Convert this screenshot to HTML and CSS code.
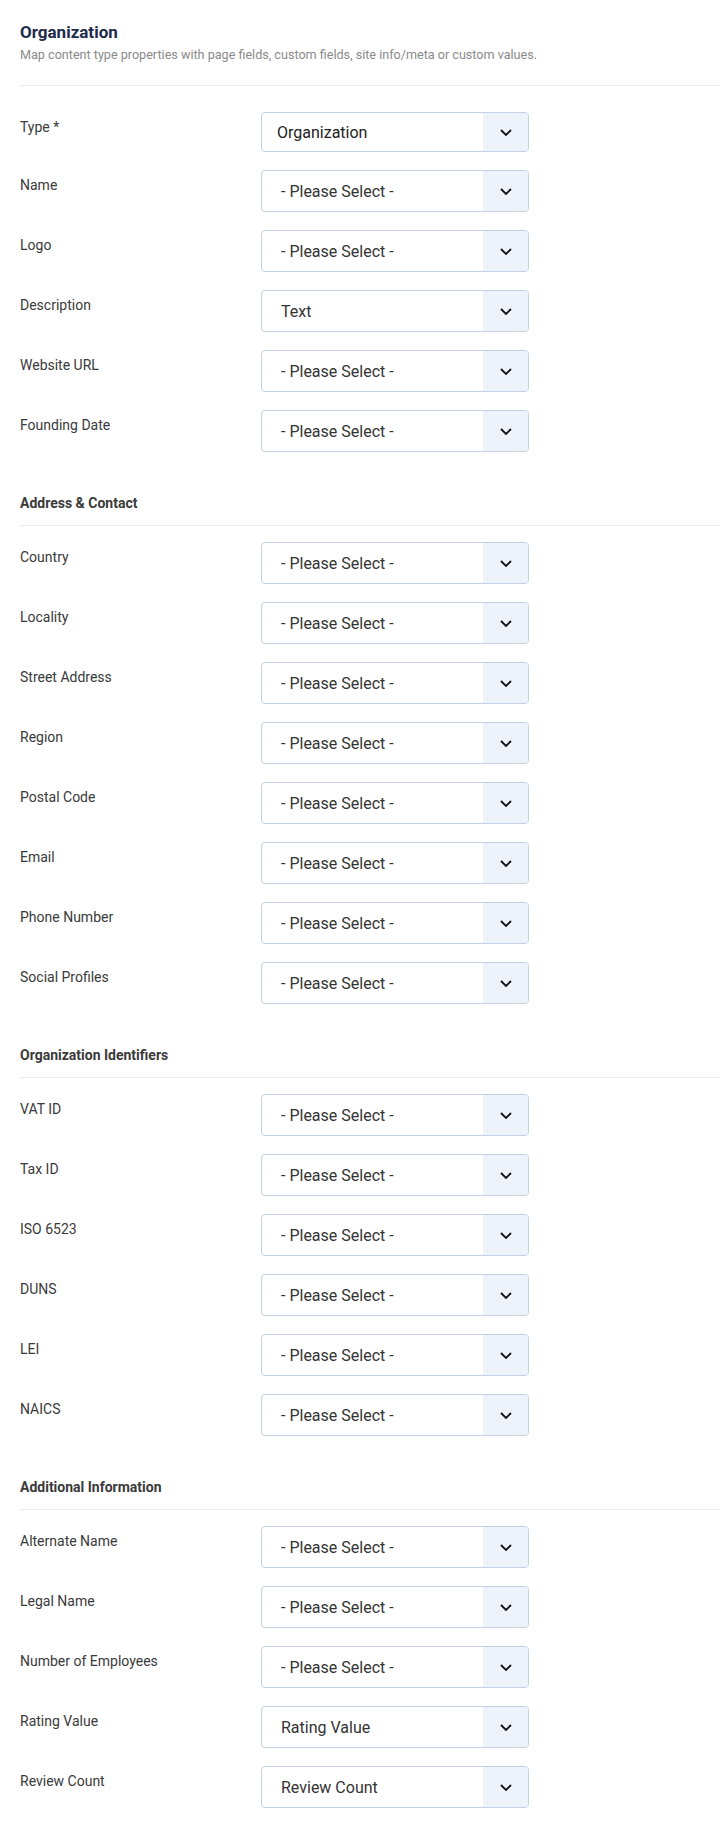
FILE: index.html
```html
<!DOCTYPE html>
<html lang="en">
<head>
    <meta charset="UTF-8">
    <meta name="viewport" content="width=device-width, initial-scale=1.0">
    <title>Organization Schema</title>
    <link rel="stylesheet" href="styles.css">
</head>
<body>
    <div class="panel">
        <div class="panel-head">
            <h2>Organization</h2>
            <p>Map content type properties with page fields, custom fields, site info/meta or custom values.</p>
        </div>

        <div class="fields">
            <div class="field">
                <label>Type *</label>
                <div class="select select-type">
                    <span class="select-value">Organization</span>
                    <span class="select-arrow"><svg viewBox="0 0 12 7" width="12" height="7"><polyline points="1,1 6,6 11,1"/></svg></span>
                </div>
            </div>
            <div class="field">
                <label>Name</label>
                <div class="select">
                    <span class="select-value">- Please Select -</span>
                    <span class="select-arrow"><svg viewBox="0 0 12 7" width="12" height="7"><polyline points="1,1 6,6 11,1"/></svg></span>
                </div>
            </div>
            <div class="field">
                <label>Logo</label>
                <div class="select">
                    <span class="select-value">- Please Select -</span>
                    <span class="select-arrow"><svg viewBox="0 0 12 7" width="12" height="7"><polyline points="1,1 6,6 11,1"/></svg></span>
                </div>
            </div>
            <div class="field">
                <label>Description</label>
                <div class="select">
                    <span class="select-value">Text</span>
                    <span class="select-arrow"><svg viewBox="0 0 12 7" width="12" height="7"><polyline points="1,1 6,6 11,1"/></svg></span>
                </div>
            </div>
            <div class="field">
                <label>Website URL</label>
                <div class="select">
                    <span class="select-value">- Please Select -</span>
                    <span class="select-arrow"><svg viewBox="0 0 12 7" width="12" height="7"><polyline points="1,1 6,6 11,1"/></svg></span>
                </div>
            </div>
            <div class="field">
                <label>Founding Date</label>
                <div class="select">
                    <span class="select-value">- Please Select -</span>
                    <span class="select-arrow"><svg viewBox="0 0 12 7" width="12" height="7"><polyline points="1,1 6,6 11,1"/></svg></span>
                </div>
            </div>
        </div>

        <div class="group">
            <h3>Address &amp; Contact</h3>
            <div class="fields">
                <div class="field">
                    <label>Country</label>
                    <div class="select">
                        <span class="select-value">- Please Select -</span>
                        <span class="select-arrow"><svg viewBox="0 0 12 7" width="12" height="7"><polyline points="1,1 6,6 11,1"/></svg></span>
                    </div>
                </div>
                <div class="field">
                    <label>Locality</label>
                    <div class="select">
                        <span class="select-value">- Please Select -</span>
                        <span class="select-arrow"><svg viewBox="0 0 12 7" width="12" height="7"><polyline points="1,1 6,6 11,1"/></svg></span>
                    </div>
                </div>
                <div class="field">
                    <label>Street Address</label>
                    <div class="select">
                        <span class="select-value">- Please Select -</span>
                        <span class="select-arrow"><svg viewBox="0 0 12 7" width="12" height="7"><polyline points="1,1 6,6 11,1"/></svg></span>
                    </div>
                </div>
                <div class="field">
                    <label>Region</label>
                    <div class="select">
                        <span class="select-value">- Please Select -</span>
                        <span class="select-arrow"><svg viewBox="0 0 12 7" width="12" height="7"><polyline points="1,1 6,6 11,1"/></svg></span>
                    </div>
                </div>
                <div class="field">
                    <label>Postal Code</label>
                    <div class="select">
                        <span class="select-value">- Please Select -</span>
                        <span class="select-arrow"><svg viewBox="0 0 12 7" width="12" height="7"><polyline points="1,1 6,6 11,1"/></svg></span>
                    </div>
                </div>
                <div class="field">
                    <label>Email</label>
                    <div class="select">
                        <span class="select-value">- Please Select -</span>
                        <span class="select-arrow"><svg viewBox="0 0 12 7" width="12" height="7"><polyline points="1,1 6,6 11,1"/></svg></span>
                    </div>
                </div>
                <div class="field">
                    <label>Phone Number</label>
                    <div class="select">
                        <span class="select-value">- Please Select -</span>
                        <span class="select-arrow"><svg viewBox="0 0 12 7" width="12" height="7"><polyline points="1,1 6,6 11,1"/></svg></span>
                    </div>
                </div>
                <div class="field">
                    <label>Social Profiles</label>
                    <div class="select">
                        <span class="select-value">- Please Select -</span>
                        <span class="select-arrow"><svg viewBox="0 0 12 7" width="12" height="7"><polyline points="1,1 6,6 11,1"/></svg></span>
                    </div>
                </div>
            </div>
        </div>

        <div class="group">
            <h3>Organization Identifiers</h3>
            <div class="fields">
                <div class="field">
                    <label>VAT ID</label>
                    <div class="select">
                        <span class="select-value">- Please Select -</span>
                        <span class="select-arrow"><svg viewBox="0 0 12 7" width="12" height="7"><polyline points="1,1 6,6 11,1"/></svg></span>
                    </div>
                </div>
                <div class="field">
                    <label>Tax ID</label>
                    <div class="select">
                        <span class="select-value">- Please Select -</span>
                        <span class="select-arrow"><svg viewBox="0 0 12 7" width="12" height="7"><polyline points="1,1 6,6 11,1"/></svg></span>
                    </div>
                </div>
                <div class="field">
                    <label>ISO 6523</label>
                    <div class="select">
                        <span class="select-value">- Please Select -</span>
                        <span class="select-arrow"><svg viewBox="0 0 12 7" width="12" height="7"><polyline points="1,1 6,6 11,1"/></svg></span>
                    </div>
                </div>
                <div class="field">
                    <label>DUNS</label>
                    <div class="select">
                        <span class="select-value">- Please Select -</span>
                        <span class="select-arrow"><svg viewBox="0 0 12 7" width="12" height="7"><polyline points="1,1 6,6 11,1"/></svg></span>
                    </div>
                </div>
                <div class="field">
                    <label>LEI</label>
                    <div class="select">
                        <span class="select-value">- Please Select -</span>
                        <span class="select-arrow"><svg viewBox="0 0 12 7" width="12" height="7"><polyline points="1,1 6,6 11,1"/></svg></span>
                    </div>
                </div>
                <div class="field">
                    <label>NAICS</label>
                    <div class="select">
                        <span class="select-value">- Please Select -</span>
                        <span class="select-arrow"><svg viewBox="0 0 12 7" width="12" height="7"><polyline points="1,1 6,6 11,1"/></svg></span>
                    </div>
                </div>
            </div>
        </div>

        <div class="group">
            <h3>Additional Information</h3>
            <div class="fields">
                <div class="field">
                    <label>Alternate Name</label>
                    <div class="select">
                        <span class="select-value">- Please Select -</span>
                        <span class="select-arrow"><svg viewBox="0 0 12 7" width="12" height="7"><polyline points="1,1 6,6 11,1"/></svg></span>
                    </div>
                </div>
                <div class="field">
                    <label>Legal Name</label>
                    <div class="select">
                        <span class="select-value">- Please Select -</span>
                        <span class="select-arrow"><svg viewBox="0 0 12 7" width="12" height="7"><polyline points="1,1 6,6 11,1"/></svg></span>
                    </div>
                </div>
                <div class="field">
                    <label>Number of Employees</label>
                    <div class="select">
                        <span class="select-value">- Please Select -</span>
                        <span class="select-arrow"><svg viewBox="0 0 12 7" width="12" height="7"><polyline points="1,1 6,6 11,1"/></svg></span>
                    </div>
                </div>
                <div class="field">
                    <label>Rating Value</label>
                    <div class="select">
                        <span class="select-value">Rating Value</span>
                        <span class="select-arrow"><svg viewBox="0 0 12 7" width="12" height="7"><polyline points="1,1 6,6 11,1"/></svg></span>
                    </div>
                </div>
                <div class="field">
                    <label>Review Count</label>
                    <div class="select">
                        <span class="select-value">Review Count</span>
                        <span class="select-arrow"><svg viewBox="0 0 12 7" width="12" height="7"><polyline points="1,1 6,6 11,1"/></svg></span>
                    </div>
                </div>
            </div>
        </div>
    </div>
</body>
</html>
```

FILE: styles.css
```css
body {
    margin: 0;
    background: #fff;
    font-family: Roboto, "Liberation Sans", sans-serif;
    color: #333;
}

.panel {
    padding: 22px 0 21px 20px;
}

.panel-head {
    padding-bottom: 21px;
    border-bottom: 1px solid #ebebeb;
    margin-bottom: 26px;
}

.panel-head h2 {
    margin: 0;
    font-size: 17px;
    line-height: 21px;
    font-weight: 700;
    color: #1c2b4a;
}

.panel-head p {
    margin: 3px 0 0;
    font-size: 12.6px;
    line-height: 18px;
    color: #8a8a8a;
}

.fields {
    display: flex;
    flex-direction: column;
    gap: 18px;
}

.field {
    display: flex;
    align-items: flex-start;
}

.field label {
    width: 241px;
    flex-shrink: 0;
    padding-top: 5px;
    font-size: 14px;
    line-height: 20px;
    color: #3a3a3a;
}

.group h3 {
    margin: 41px 0 16px;
    padding-bottom: 12px;
    border-bottom: 1px solid #ebebeb;
    font-size: 14px;
    line-height: 20px;
    font-weight: 700;
    color: #3a3a3a;
}

.select {
    width: 268px;
    height: 42px;
    box-sizing: border-box;
    display: flex;
    align-items: center;
    border: 1px solid #c3d1e6;
    border-radius: 4px;
    background: #fff;
    overflow: hidden;
}

.select-value {
    flex: 1;
    padding-left: 19px;
    font-size: 16px;
    color: #333;
    white-space: nowrap;
}

.select-arrow {
    width: 45px;
    align-self: stretch;
    display: flex;
    align-items: center;
    justify-content: center;
    background: #eef3fb;
}

.select-arrow svg {
    fill: none;
    stroke: #111;
    stroke-width: 1.8;
}

.select-type {
    height: 40px;
}

.select-type .select-value {
    padding-left: 15px;
    color: #222;
}
```
